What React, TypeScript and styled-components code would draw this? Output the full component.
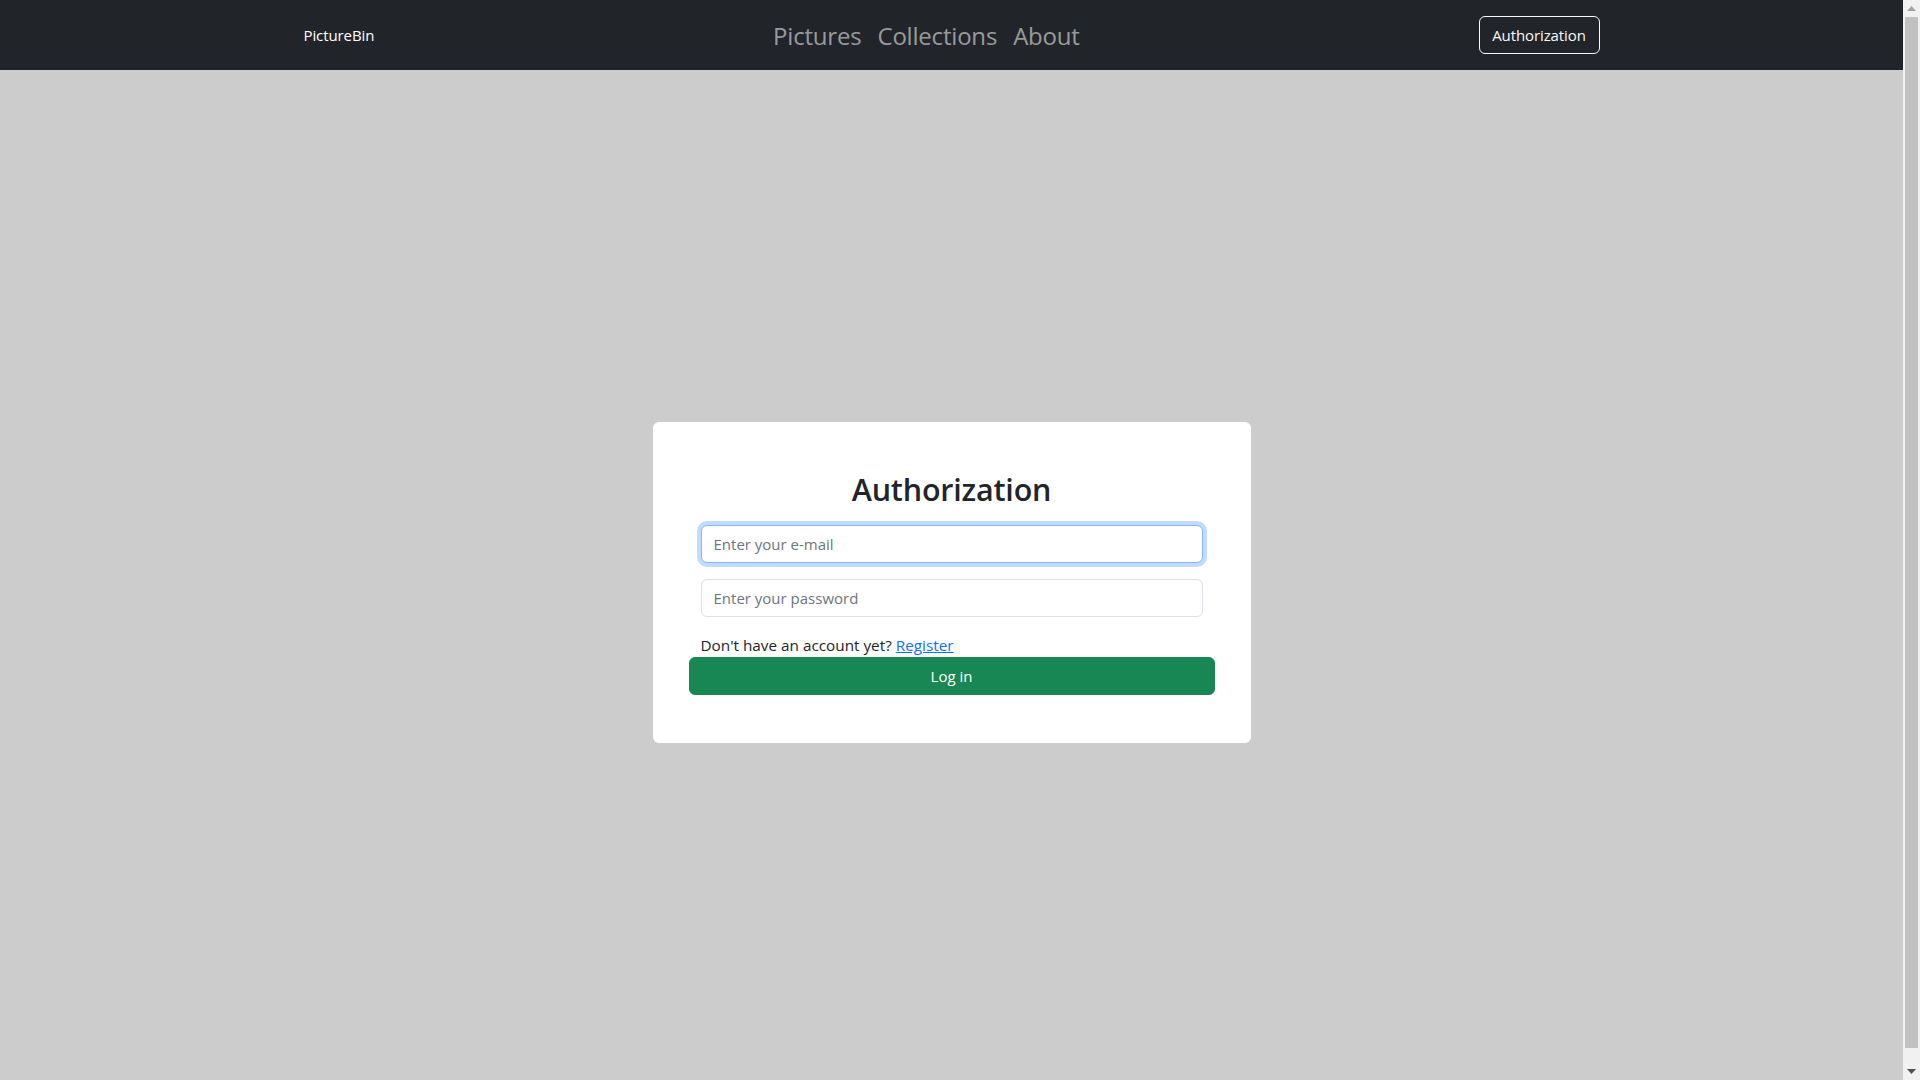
import React from "react";
import styled, { createGlobalStyle } from "styled-components";

const GlobalStyle = createGlobalStyle`
  *, *::before, *::after { box-sizing: border-box; }
  html, body { margin: 0; padding: 0; overflow: hidden; }
  body {
    background: #cccccc;
    font-family: "Segoe UI", "Open Sans", "Noto Sans", sans-serif;
    font-size: 16px;
    line-height: 1.5;
    color: #212529;
  }
`;

const Viewport = styled.div`
  display: flex;
  height: 100vh;
  overflow: hidden;
`;

const Page = styled.div`
  flex: 1;
  min-width: 0;
  height: 100vh;
  overflow: hidden;
`;

const ScrollTrack = styled.aside`
  width: 17px;
  height: 100vh;
  background: #f1f1f1;
  display: flex;
  flex-direction: column;
  align-items: center;
`;

const ScrollArrow = styled.div<{ $dark?: boolean }>`
  width: 17px;
  height: 17px;
  display: flex;
  align-items: center;
  justify-content: center;
  color: ${(p) => (p.$dark ? "#505050" : "#a3a3a3")};
`;

const ScrollThumb = styled.div`
  width: 13px;
  height: 1031px;
  background: #c1c1c1;
`;

const ScrollSpacer = styled.div`
  flex: 1;
`;

const Navbar = styled.nav`
  height: 70px;
  background: #212529;
  display: flex;
  align-items: center;
`;

const NavContainer = styled.div`
  width: 1320px;
  margin: 0 auto;
  padding: 0 12px;
  display: flex;
  align-items: center;
  justify-content: space-between;
`;

const Brand = styled.a`
  color: #ffffff;
  font-size: 15px;
  text-decoration: none;
  line-height: 24px;
  letter-spacing: -0.1px;
`;

const NavLinks = styled.ul`
  list-style: none;
  margin: 0;
  padding: 0;
  display: flex;
`;

const NavLink = styled.a`
  display: block;
  padding: 9px 8px 7px;
  font-size: 24px;
  line-height: 36px;
  color: rgba(255, 255, 255, 0.55);
  text-decoration: none;
  letter-spacing: -0.2px;
`;

const OutlineButton = styled.button`
  height: 38px;
  width: 121px;
  padding: 0 10px;
  border: 1px solid #f8f9fa;
  border-radius: 6px;
  background: transparent;
  color: #f8f9fa;
  font-family: inherit;
  font-size: 15px;
  line-height: 24px;
  letter-spacing: -0.1px;
  cursor: pointer;
`;

const Main = styled.main`
  min-height: calc(100vh - 54px);
  display: flex;
  align-items: center;
  justify-content: center;
`;

const Card = styled.div`
  width: 598px;
  background: #ffffff;
  border-radius: 6px;
  padding: 48px 36px 48px;
  margin-top: -1px;
`;

const Title = styled.h2`
  margin: 0 0 17px;
  text-align: center;
  font-size: 30.5px;
  font-weight: 600;
  line-height: 38px;
  letter-spacing: -0.2px;
  color: #212529;
`;

const Form = styled.form`
  display: flex;
  flex-direction: column;
`;

const Field = styled.input<{ $focused?: boolean }>`
  display: block;
  margin: 0 12px 16px;
  height: 38px;
  padding: 6px 12px;
  font-family: inherit;
  font-size: 15px;
  line-height: 24px;
  color: #212529;
  background: #ffffff;
  border: 1px solid ${(p) => (p.$focused ? "#86b7fe" : "#dee2e6")};
  border-radius: 6px;
  outline: none;
  box-shadow: ${(p) =>
    p.$focused ? "0 0 0 4px rgba(13, 110, 253, 0.25)" : "none"};
  &::placeholder {
    color: #6c757d;
    opacity: 1;
  }
`;

const Hint = styled.p`
  margin: 0 12px;
  font-size: 15.3px;
  line-height: 24px;
  height: 24px;
  color: #212529;
`;

const HintLink = styled.a`
  color: #0d6efd;
  text-decoration: underline;
`;

const SubmitButton = styled.button`
  height: 38px;
  width: 100%;
  border: 1px solid #198754;
  border-radius: 6px;
  background: #198754;
  color: #ffffff;
  font-family: inherit;
  font-size: 15px;
  line-height: 24px;
  cursor: pointer;
`;

const Triangle = ({ down }: { down?: boolean }) => (
  <svg width="9" height="5" viewBox="0 0 9 5">
    <path
      d={down ? "M0 0 L9 0 L4.5 5 Z" : "M0 5 L9 5 L4.5 0 Z"}
      fill="currentColor"
    />
  </svg>
);

export default function App() {
  return (
    <>
      <GlobalStyle />
      <Viewport>
        <Page>
          <Navbar>
            <NavContainer>
              <Brand href="#">PictureBin</Brand>
              <NavLinks>
                <li>
                  <NavLink href="#">Pictures</NavLink>
                </li>
                <li>
                  <NavLink href="#">Collections</NavLink>
                </li>
                <li>
                  <NavLink href="#">About</NavLink>
                </li>
              </NavLinks>
              <OutlineButton type="button">Authorization</OutlineButton>
            </NavContainer>
          </Navbar>
          <Main>
            <Card>
              <Title>Authorization</Title>
              <Form onSubmit={(e) => e.preventDefault()}>
                <Field $focused type="email" placeholder="Enter your e-mail" />
                <Field type="password" placeholder="Enter your password" />
                <Hint>
                  Don't have an account yet?{" "}
                  <HintLink href="#">Register</HintLink>
                </Hint>
                <SubmitButton type="submit">Log in</SubmitButton>
              </Form>
            </Card>
          </Main>
        </Page>
        <ScrollTrack aria-hidden="true">
          <ScrollArrow>
            <Triangle />
          </ScrollArrow>
          <ScrollThumb />
          <ScrollSpacer />
          <ScrollArrow $dark>
            <Triangle down />
          </ScrollArrow>
        </ScrollTrack>
      </Viewport>
    </>
  );
}
